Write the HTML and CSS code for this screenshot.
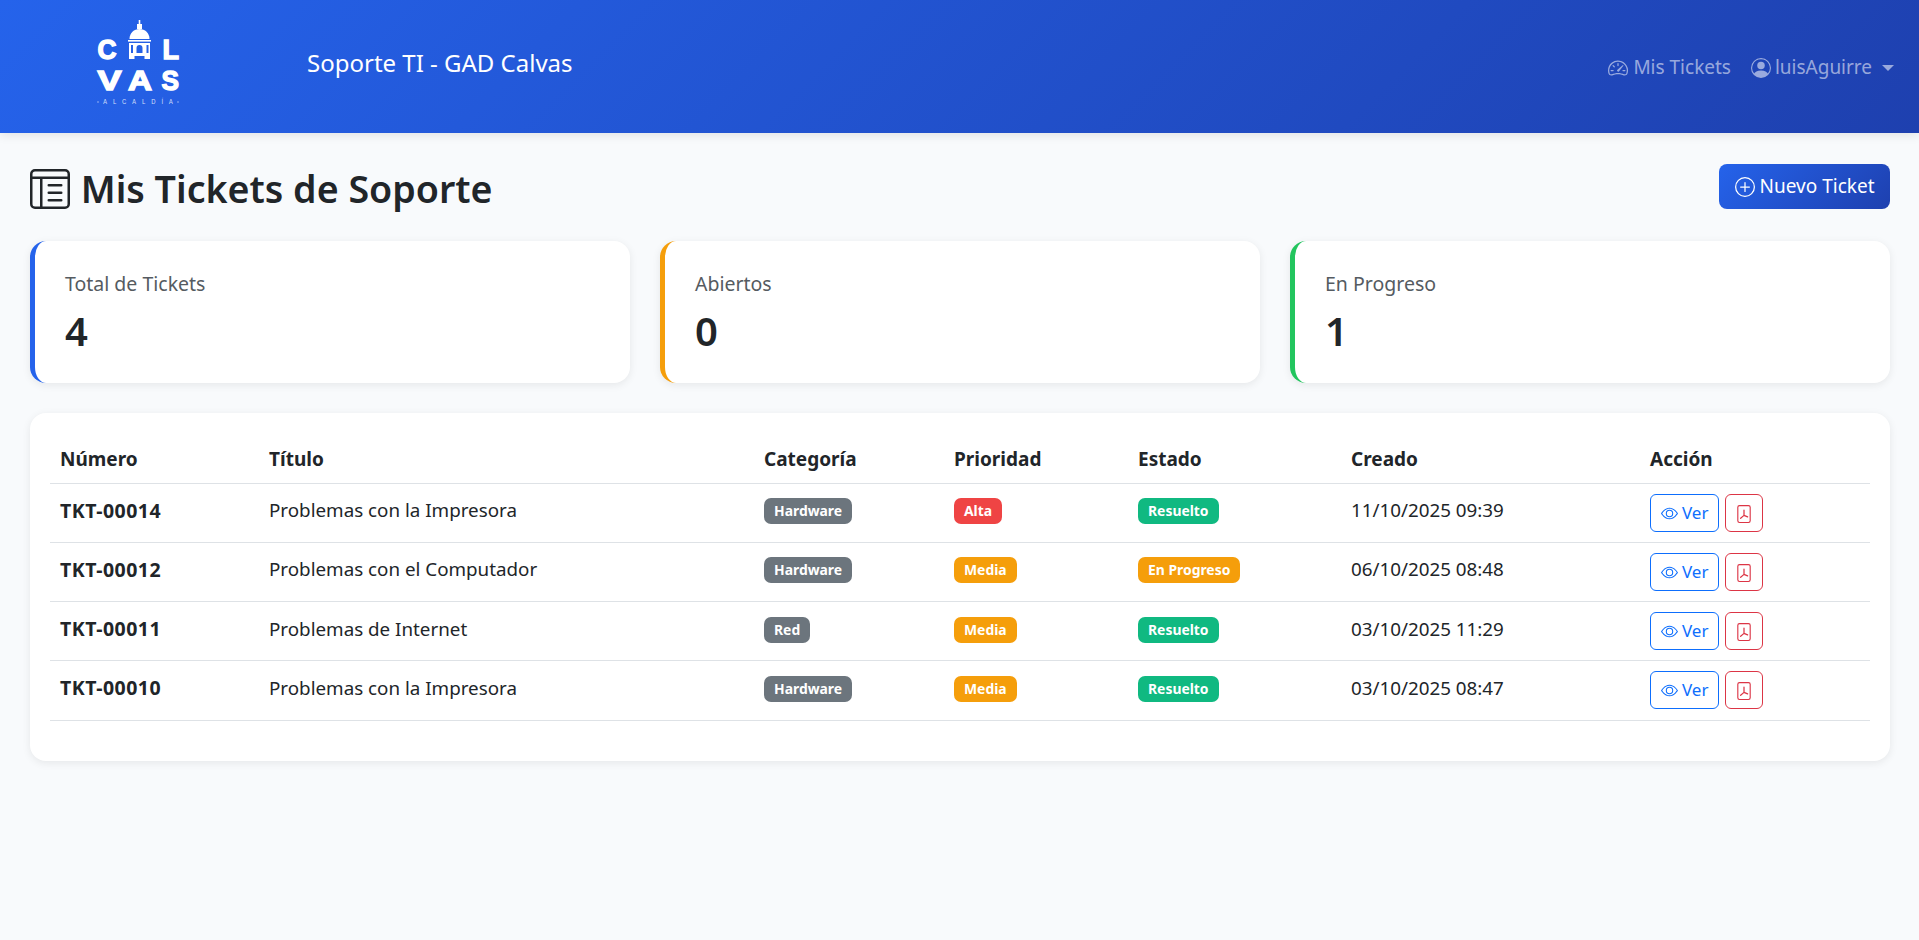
FILE: index.html
```html
<!DOCTYPE html>
<html lang="es">
<head>
	<meta charset="UTF-8">
	<title>Mis Tickets de Soporte</title>
	<link rel="stylesheet" href="styles.css">
</head>
<body>
	<svg class="defs" width="0" height="0">
		<symbol id="i-speed" viewBox="0 0 16 16"><path d="M8 4a.5.5 0 0 1 .5.5V6a.5.5 0 0 1-1 0V4.5A.5.5 0 0 1 8 4zM3.732 5.732a.5.5 0 0 1 .707 0l.915.914a.5.5 0 1 1-.708.708l-.914-.915a.5.5 0 0 1 0-.707zM2 10a.5.5 0 0 1 .5-.5h1.586a.5.5 0 0 1 0 1H2.5A.5.5 0 0 1 2 10zm9.5 0a.5.5 0 0 1 .5-.5h1.5a.5.5 0 0 1 0 1H12a.5.5 0 0 1-.5-.5zm.754-4.246a.389.389 0 0 0-.527-.02L7.547 9.31a.91.91 0 1 0 1.302 1.258l3.434-4.297a.389.389 0 0 0-.029-.518z"/><path fill-rule="evenodd" d="M0 10a8 8 0 1 1 15.547 2.661c-.442 1.253-1.845 1.602-2.932 1.25C11.309 13.488 9.475 13 8 13c-1.474 0-3.31.488-4.615.911-1.087.352-2.49.003-2.932-1.25A7.988 7.988 0 0 1 0 10zm8-7a7 7 0 0 0-6.603 9.329c.203.575.923.876 1.68.63C4.397 12.533 6.358 12 8 12s3.604.532 4.923.96c.757.245 1.477-.056 1.68-.631A7 7 0 0 0 8 3z"/></symbol>
		<symbol id="i-person" viewBox="0 0 16 16"><path d="M11 6a3 3 0 1 1-6 0 3 3 0 0 1 6 0z"/><path fill-rule="evenodd" d="M0 8a8 8 0 1 1 16 0A8 8 0 0 1 0 8zm8-7a7 7 0 0 0-5.468 11.37C3.242 11.226 4.805 10 8 10s4.757 1.225 5.468 2.37A7 7 0 0 0 8 1z"/></symbol>
		<symbol id="i-plus" viewBox="0 0 16 16"><path d="M8 15A7 7 0 1 1 8 1a7 7 0 0 1 0 14zm0 1A8 8 0 1 0 8 0a8 8 0 0 0 0 16z"/><path d="M8 4a.5.5 0 0 1 .5.5v3h3a.5.5 0 0 1 0 1h-3v3a.5.5 0 0 1-1 0v-3h-3a.5.5 0 0 1 0-1h3v-3A.5.5 0 0 1 8 4z"/></symbol>
		<symbol id="i-layout" viewBox="0 0 16 16"><path d="M13 6.5a.5.5 0 0 0-.5-.5h-5a.5.5 0 0 0 0 1h5a.5.5 0 0 0 .5-.5zm0 3a.5.5 0 0 0-.5-.5h-5a.5.5 0 0 0 0 1h5a.5.5 0 0 0 .5-.5zm-.5 2.5a.5.5 0 0 1 0 1h-5a.5.5 0 0 1 0-1h5z"/><path d="M14 0a2 2 0 0 1 2 2v12a2 2 0 0 1-2 2H2a2 2 0 0 1-2-2V2a2 2 0 0 1 2-2h12zM2 1a1 1 0 0 0-1 1v1h14V2a1 1 0 0 0-1-1H2zM1 4v10a1 1 0 0 0 1 1h2V4H1zm4 0v11h9a1 1 0 0 0 1-1V4H5z"/></symbol>
		<symbol id="i-eye" viewBox="0 0 16 16"><path d="M16 8s-3-5.5-8-5.5S0 8 0 8s3 5.5 8 5.5S16 8 16 8zM1.173 8a13.133 13.133 0 0 1 1.66-2.043C4.12 4.668 5.88 3.5 8 3.5c2.12 0 3.879 1.168 5.168 2.457A13.133 13.133 0 0 1 14.828 8c-.058.087-.122.183-.195.288-.335.48-.83 1.12-1.465 1.755C11.879 11.332 10.119 12.5 8 12.5c-2.12 0-3.879-1.168-5.168-2.457A13.134 13.134 0 0 1 1.172 8z"/><path d="M8 5.5a2.5 2.5 0 1 0 0 5 2.5 2.5 0 0 0 0-5zM4.5 8a3.5 3.5 0 1 1 7 0 3.5 3.5 0 0 1-7 0z"/></symbol>
		<symbol id="i-pdf" viewBox="0 0 16 16"><path d="M4 0a2 2 0 0 0-2 2v12a2 2 0 0 0 2 2h8a2 2 0 0 0 2-2V2a2 2 0 0 0-2-2H4zm0 1h8a1 1 0 0 1 1 1v12a1 1 0 0 1-1 1H4a1 1 0 0 1-1-1V2a1 1 0 0 1 1-1z"/><path d="M8 4.5v4.7M8 9.2l-3 2.6M8 9.2l3.2 1.4" fill="none" stroke="currentColor" stroke-width="1.1" stroke-linecap="round"/></symbol>
	</svg>

	<nav class="navbar">
		<div class="brand">
			<svg class="logo" viewBox="95 18 90 90" width="90" height="90">
				<g class="logo-big">
					<text x="97.5" y="58.5" textLength="19" lengthAdjust="spacingAndGlyphs">C</text>
					<text x="162.5" y="58.5" textLength="16.5" lengthAdjust="spacingAndGlyphs">L</text>
					<text x="97.5" y="89.5" textLength="24" lengthAdjust="spacingAndGlyphs">V</text>
					<text x="128" y="89.5" textLength="24" lengthAdjust="spacingAndGlyphs">A</text>
					<text x="161.5" y="89.5" textLength="17.5" lengthAdjust="spacingAndGlyphs">S</text>
				</g>
				<rect x="138.7" y="20" width="1.6" height="4"/>
				<rect x="137" y="24" width="5" height="5"/>
				<path d="M129.5 39C129.5 33 134 29 139.5 29S149.5 33 149.5 39z"/>
				<rect x="128" y="40" width="23" height="1.6"/>
				<path fill-rule="evenodd" d="M129 43h21v16h-5.5v-3h-10v3H129zM131 45v8h2v-8zM146.5 45v8h2v-8zM136.5 53h6v-5a3 3 0 0 0-6 0z"/>
				<text class="logo-sub" x="103" y="104" textLength="70">ALCALDÍA</text>
				<circle class="logo-dot" cx="98" cy="102" r=".7"/>
				<circle class="logo-dot" cx="178" cy="102" r=".7"/>
			</svg>
			<span class="brand-name">Soporte TI - GAD Calvas</span>
		</div>
		<div class="nav-links">
			<a href="#"><svg class="ico"><use href="#i-speed"/></svg> Mis Tickets</a>
			<a href="#"><svg class="ico ico-person"><use href="#i-person"/></svg> luisAguirre <i class="caret"></i></a>
		</div>
	</nav>

	<main class="page">
		<div class="page-head">
			<h1><svg class="ico"><use href="#i-layout"/></svg> Mis Tickets de Soporte</h1>
			<a href="#" class="btn-new"><svg class="ico"><use href="#i-plus"/></svg> Nuevo Ticket</a>
		</div>

		<div class="stats">
			<div class="stat blue"><div class="stat-label">Total de Tickets</div><div class="stat-num">4</div></div>
			<div class="stat orange"><div class="stat-label">Abiertos</div><div class="stat-num">0</div></div>
			<div class="stat green"><div class="stat-label">En Progreso</div><div class="stat-num">1</div></div>
		</div>

		<div class="table-card">
			<table>
				<thead>
					<tr><th class="c-num">Número</th><th class="c-tit">Título</th><th class="c-cat">Categoría</th><th class="c-pri">Prioridad</th><th class="c-est">Estado</th><th class="c-cre">Creado</th><th>Acción</th></tr>
				</thead>
				<tbody>
					<tr>
						<td><b>TKT-00014</b></td><td>Problemas con la Impresora</td>
						<td><span class="badge gray">Hardware</span></td><td><span class="badge red">Alta</span></td><td><span class="badge teal">Resuelto</span></td>
						<td>11/10/2025 09:39</td>
						<td class="actions"><a href="#" class="btn-ver"><svg class="ico"><use href="#i-eye"/></svg> Ver</a><a href="#" class="btn-pdf"><svg class="ico"><use href="#i-pdf"/></svg></a></td>
					</tr>
					<tr>
						<td><b>TKT-00012</b></td><td>Problemas con el Computador</td>
						<td><span class="badge gray">Hardware</span></td><td><span class="badge amber">Media</span></td><td><span class="badge amber">En Progreso</span></td>
						<td>06/10/2025 08:48</td>
						<td class="actions"><a href="#" class="btn-ver"><svg class="ico"><use href="#i-eye"/></svg> Ver</a><a href="#" class="btn-pdf"><svg class="ico"><use href="#i-pdf"/></svg></a></td>
					</tr>
					<tr>
						<td><b>TKT-00011</b></td><td>Problemas de Internet</td>
						<td><span class="badge gray">Red</span></td><td><span class="badge amber">Media</span></td><td><span class="badge teal">Resuelto</span></td>
						<td>03/10/2025 11:29</td>
						<td class="actions"><a href="#" class="btn-ver"><svg class="ico"><use href="#i-eye"/></svg> Ver</a><a href="#" class="btn-pdf"><svg class="ico"><use href="#i-pdf"/></svg></a></td>
					</tr>
					<tr>
						<td><b>TKT-00010</b></td><td>Problemas con la Impresora</td>
						<td><span class="badge gray">Hardware</span></td><td><span class="badge amber">Media</span></td><td><span class="badge teal">Resuelto</span></td>
						<td>03/10/2025 08:47</td>
						<td class="actions"><a href="#" class="btn-ver"><svg class="ico"><use href="#i-eye"/></svg> Ver</a><a href="#" class="btn-pdf"><svg class="ico"><use href="#i-pdf"/></svg></a></td>
					</tr>
				</tbody>
			</table>
		</div>
	</main>
</body>
</html>
```

FILE: styles.css
```css
* { box-sizing: border-box; }
body { margin: 0; background: #f8fafc; color: #212529; font-family: "Noto Sans", "Open Sans", sans-serif; font-size: 18px; min-height: 940px; }
a { text-decoration: none; }
.defs { position: absolute; }
.ico { width: 20px; height: 20px; fill: currentColor; vertical-align: -4px; }

.navbar { height: 133px; background: linear-gradient(135deg, #2563eb, #1e40af); box-shadow: 0 2px 10px rgba(0,0,0,.1); display: flex; align-items: center; justify-content: space-between; padding: 0 25px 0 95px; }
.brand { display: flex; align-items: center; gap: 122px; color: #fff; }
.brand-name { font-size: 24px; margin-top: -8px; }
.logo { display: block; fill: #fff; margin-top: -7px; }
.logo-big { font-family: "Liberation Sans", sans-serif; font-weight: 700; font-size: 27.5px; stroke: #fff; stroke-width: 1.4px; }
.logo-sub { font-family: "Inter", sans-serif; font-size: 6px; fill: rgba(255,255,255,.8); }
.logo-dot { fill: rgba(255,255,255,.7); }
.nav-links { display: flex; gap: 20px; font-size: 19px; }
.nav-links a { color: rgba(255,255,255,.55); }
.ico-person { margin-right: -1px; }
.caret { display: inline-block; margin-left: 5px; vertical-align: 3px; border-top: 6px solid; border-left: 6px solid transparent; border-right: 6px solid transparent; }

.page { padding: 30px 29px 0 30px; }
.page-head { display: flex; justify-content: space-between; align-items: flex-start; margin-bottom: 26px; }
h1 { margin: 0; font-size: 37.6px; font-weight: 600; line-height: 52px; }
h1 .ico { width: 40px; height: 40px; vertical-align: -6px; margin-right: 1px; }
.btn-new { display: block; height: 45px; line-height: 45px; margin-top: 1px; padding: 0 15.5px; color: #fff; border-radius: 8px; font-size: 19px; background: linear-gradient(135deg, #2563eb, #1e40af); }

.stats { display: grid; grid-template-columns: repeat(3, 1fr); gap: 30px; margin-bottom: 30px; }
.stat { height: 142px; background: #fff; border-radius: 16px; border-left: 5px solid; padding: 31px 30px 0; box-shadow: 0 2px 8px rgba(0,0,0,.08); }
.stat.blue { border-color: #2563eb; }
.stat.orange { border-color: #f59e0b; }
.stat.green { border-color: #22c55e; }
.stat-label { font-size: 19.5px; color: #555b61; line-height: 24px; }
.stat-num { font-size: 40px; font-weight: 600; line-height: 50px; margin-top: 10px; }

.table-card { background: #fff; border-radius: 16px; padding: 20px 20px 40px; box-shadow: 0 2px 8px rgba(0,0,0,.08); }
table { width: 100%; border-collapse: collapse; table-layout: fixed; }
th { text-align: left; font-weight: 700; padding: 2px 10px 0; height: 50px; border-bottom: 1px solid #dee2e6; font-size: 19px; }
td { padding: 0 10px 5px; height: 59.25px; border-bottom: 1px solid #dee2e6; font-size: 18.8px; }
td b { font-size: 19.5px; letter-spacing: .5px; }
.c-num { width: 209px; }
.c-tit { width: 495px; }
.c-cat { width: 190px; }
.c-pri { width: 184px; }
.c-est { width: 213px; }
.c-cre { width: 299px; }
.badge { display: inline-block; height: 26px; line-height: 25px; padding: 0 10px; border-radius: 7px; color: #fff; font-size: 13.9px; font-weight: 700; }
.gray { background: #6c757d; }
.red { background: #ef4444; }
.amber { background: #f59e0b; }
.teal { background: #10b981; }
td.actions { white-space: nowrap; padding-bottom: 0; }
.btn-ver, .btn-pdf { display: inline-block; height: 38px; line-height: 36px; border: 1px solid; border-radius: 6px; vertical-align: middle; font-size: 17px; text-align: center; }
.btn-ver { width: 69px; color: #0d6efd; margin-right: 6px; }
.btn-pdf { width: 38px; color: #dc3545; }
.btn-ver .ico { width: 17px; height: 17px; vertical-align: -3px; }
.btn-pdf .ico { width: 18px; height: 18px; vertical-align: -4px; }
```
